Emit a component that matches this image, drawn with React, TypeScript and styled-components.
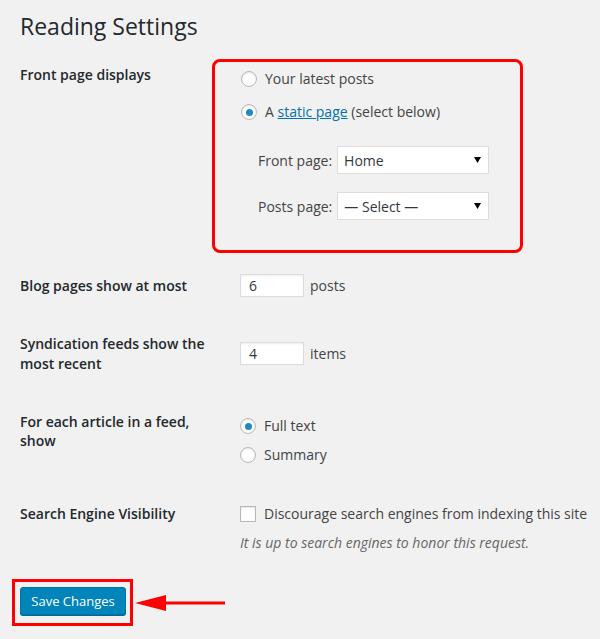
import styled, { createGlobalStyle } from "styled-components";

const GlobalStyle = createGlobalStyle`
  body {
    margin: 0;
    background: #f1f1f1;
    font-family: "Open Sans", "Noto Sans", sans-serif;
    color: #444;
    font-size: 14px;
  }
`;

const Page = styled.div`
  padding: 0 0 20px 20px;
`;

const Title = styled.h1`
  margin: 0;
  padding-top: 12px;
  font-size: 23px;
  line-height: 29px;
  font-weight: 400;
  color: #23282d;
`;

const Row = styled.div<{ $gap: number }>`
  display: flex;
  align-items: flex-start;
  margin-top: ${(p) => p.$gap}px;
`;

const Label = styled.div<{ $pad?: number; $lh?: number }>`
  width: 200px;
  margin-right: 20px;
  flex: none;
  padding-top: ${(p) => p.$pad ?? 0}px;
  font-weight: 600;
  color: #23282d;
  line-height: ${(p) => p.$lh ?? 20}px;
`;

const Highlight = styled.div`
  margin-left: -28px;
  width: 311px;
  height: 194px;
  box-sizing: border-box;
  border: 3px solid #ff0000;
  border-radius: 8px;
  padding: 5px 0 0 26px;
`;

const Choices = styled.div<{ $top?: number; $space: number }>`
  display: flex;
  flex-direction: column;
  gap: ${(p) => p.$space}px;
  margin-top: ${(p) => p.$top ?? 0}px;
`;

const Choice = styled.label`
  display: flex;
  align-items: center;
  gap: 8px;
  line-height: 24px;
  color: #444;
`;

const Radio = styled.span<{ $on?: boolean }>`
  width: 16px;
  height: 16px;
  box-sizing: border-box;
  border-radius: 50%;
  border: 1px solid #b4b9be;
  background: #fff;
  box-shadow: inset 0 1px 2px rgba(0, 0, 0, 0.1);
  display: flex;
  align-items: center;
  justify-content: center;
  flex: none;
  &::before {
    content: "";
    display: ${(p) => (p.$on ? "block" : "none")};
    width: 7px;
    height: 7px;
    border-radius: 50%;
    background: #1e8cbe;
  }
`;

const Box = styled.span`
  width: 16px;
  height: 16px;
  box-sizing: border-box;
  border: 1px solid #b4b9be;
  background: #fff;
  box-shadow: inset 0 1px 2px rgba(0, 0, 0, 0.1);
  flex: none;
`;

const Link = styled.a`
  color: #0073aa;
  text-decoration: underline;
`;

const PageSelects = styled.div`
  display: flex;
  flex-direction: column;
  gap: 18px;
  margin: 22px 0 0 17px;
`;

const SelectRow = styled.div`
  display: flex;
  align-items: center;
  gap: 5px;
  color: #444;
`;

const Select = styled.div`
  width: 152px;
  height: 28px;
  box-sizing: border-box;
  border: 1px solid #ddd;
  background: #fff;
  display: flex;
  align-items: center;
  justify-content: space-between;
  padding: 0 7px 0 6px;
  color: #32373c;
  svg {
    display: block;
  }
`;

const NumberBox = styled.div<{ $top?: number }>`
  width: 64px;
  height: 23px;
  box-sizing: border-box;
  border: 1px solid #ddd;
  background: #fff;
  box-shadow: inset 0 1px 2px rgba(0, 0, 0, 0.07);
  padding-left: 8px;
  line-height: 21px;
  color: #32373c;
  margin-top: ${(p) => p.$top ?? 0}px;
`;

const Inline = styled.div<{ $top?: number }>`
  display: flex;
  align-items: flex-start;
  gap: 6px;
  line-height: 23px;
  margin-top: ${(p) => p.$top ?? 0}px;
`;

const Note = styled.p`
  margin: 9px 0 0;
  font-style: italic;
  color: #666;
  line-height: 20px;
`;

const Field = styled.div`
  display: flex;
  flex-direction: column;
`;

const Submit = styled.div`
  margin: 26px 0 0 -8px;
  display: flex;
  align-items: center;
`;

const Callout = styled.div`
  border: 3px solid #ff0000;
  padding: 5px 4px 8px 5px;
`;

const Button = styled.button`
  width: 106px;
  height: 28px;
  box-sizing: border-box;
  background: #0085ba;
  border: 1px solid #0073aa;
  border-radius: 3px;
  box-shadow: 0 1px 0 #006799;
  color: #fff;
  font-family: "Open Sans", "Noto Sans", sans-serif;
  font-size: 13px;
  padding: 0;
  cursor: pointer;
`;

const Arrow = () => (
  <svg width="92" height="18" viewBox="0 0 92 18" style={{ marginLeft: 2 }}>
    <polygon points="0,9 31,1 31,17" fill="#ff0000" />
    <rect x="30" y="7.5" width="60" height="3" fill="#ff0000" />
  </svg>
);

const Caret = () => (
  <svg width="7" height="6" viewBox="0 0 7 6">
    <polygon points="0,0 7,0 3.5,6" fill="#000" />
  </svg>
);

export default function App() {
  return (
    <Page>
      <GlobalStyle />
      <Title>Reading Settings</Title>

      <Row $gap={18}>
        <Label $pad={6}>Front page displays</Label>
        <Highlight>
          <Choices $space={9}>
            <Choice>
              <Radio />
              Your latest posts
            </Choice>
            <Choice>
              <Radio $on />
              <span>
                A <Link>static page</Link> (select below)
              </span>
            </Choice>
          </Choices>
          <PageSelects>
            <SelectRow>
              Front page:
              <Select>
                Home
                <Caret />
              </Select>
            </SelectRow>
            <SelectRow>
              Posts page:
              <Select>
                — Select —
                <Caret />
              </Select>
            </SelectRow>
          </PageSelects>
        </Highlight>
      </Row>

      <Row $gap={21}>
        <Label $lh={24}>Blog pages show at most</Label>
        <Inline>
          <NumberBox>6</NumberBox>
          posts
        </Inline>
      </Row>

      <Row $gap={36}>
        <Label>Syndication feeds show the most recent</Label>
        <Inline $top={8}>
          <NumberBox>4</NumberBox>
          items
        </Inline>
      </Row>

      <Row $gap={38}>
        <Label $lh={19}>For each article in a feed, show</Label>
        <Choices $top={2} $space={5}>
          <Choice>
            <Radio $on />
            Full text
          </Choice>
          <Choice>
            <Radio />
            Summary
          </Choice>
        </Choices>
      </Row>

      <Row $gap={37}>
        <Label>Search Engine Visibility</Label>
        <Field>
          <Choice as="div" style={{ lineHeight: "20px" }}>
            <Box />
            Discourage search engines from indexing this site
          </Choice>
          <Note>It is up to search engines to honor this request.</Note>
        </Field>
      </Row>

      <Submit>
        <Callout>
          <Button type="button">Save Changes</Button>
        </Callout>
        <Arrow />
      </Submit>
    </Page>
  );
}
